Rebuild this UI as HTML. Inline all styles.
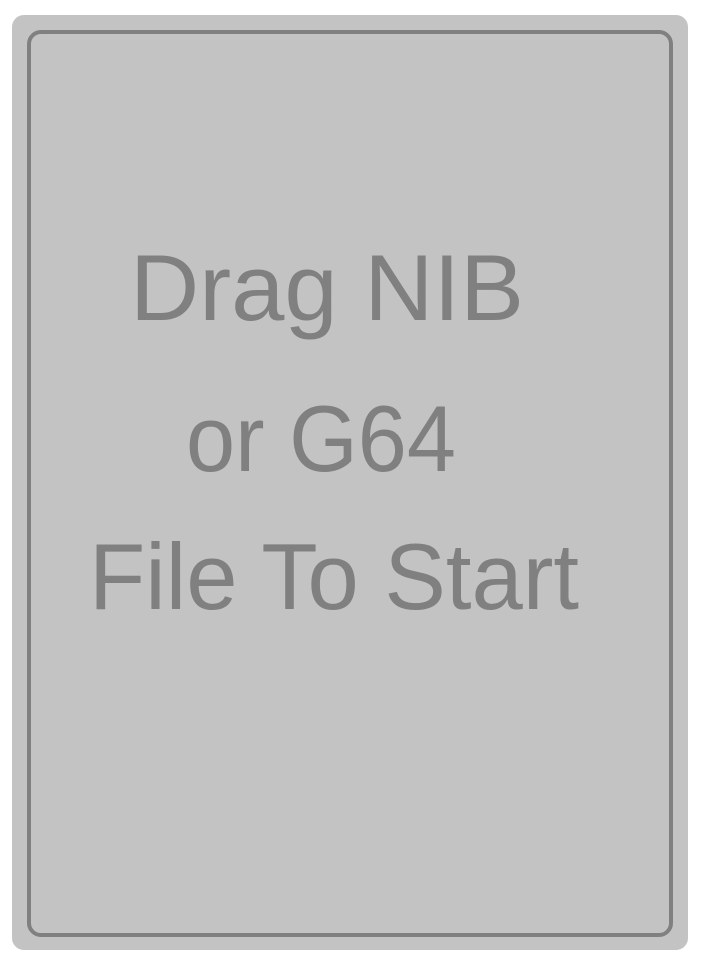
<!DOCTYPE html>
<html><head><meta charset="utf-8"><style>
html,body{margin:0;padding:0;background:#fff;width:701px;height:964px;overflow:hidden}
.outer{position:absolute;left:12px;top:15px;width:676px;height:935px;background:#c3c3c3;border-radius:12px}
.inner{position:absolute;left:27px;top:30px;width:638px;height:899px;border:4px solid #808080;border-radius:14px}
svg{position:absolute;left:0;top:0}
</style></head><body>
<div class="outer"></div>
<div class="inner"></div>
<svg width="701" height="964" font-family="Liberation Sans, sans-serif" font-size="94" fill="#808080">
<text x="130" y="320" textLength="394" lengthAdjust="spacingAndGlyphs">Drag NIB</text>
<text x="186" y="471" textLength="270" lengthAdjust="spacingAndGlyphs">or G64</text>
<text x="89" y="609" textLength="490" lengthAdjust="spacingAndGlyphs">File To Start</text>
</svg>
</body></html>
